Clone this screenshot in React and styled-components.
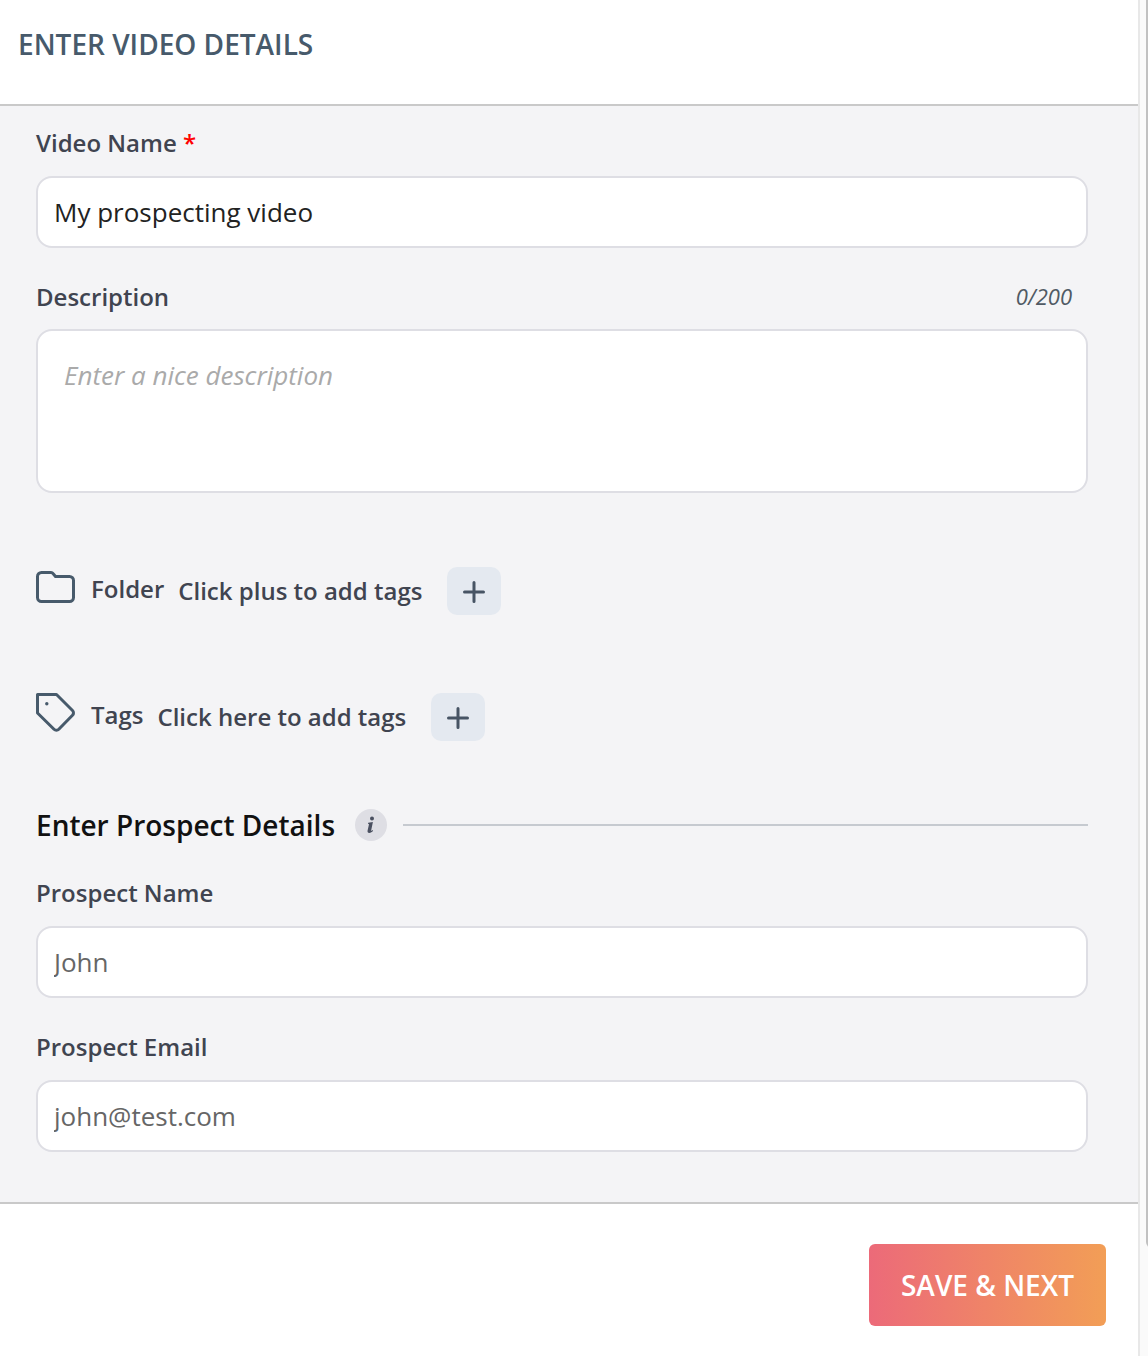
import React, { useState } from "react";
import styled, { createGlobalStyle } from "styled-components";

const GlobalStyle = createGlobalStyle`
  *, *::before, *::after { box-sizing: border-box; }
  body {
    margin: 0;
    background: #fafafa;
    font-family: "Open Sans", "Noto Sans", sans-serif;
  }
  button, input, textarea { font: inherit; }
`;

const Page = styled.div`
  display: flex;
  min-height: 100vh;
`;

const Panel = styled.form`
  flex: 1;
  min-width: 0;
  display: flex;
  flex-direction: column;
  background: #fff;
`;

const ScrollTrack = styled.div`
  width: 10px;
  overflow: hidden;
  background: #fafafa;
  border-left: 2px solid #e8e8e8;
`;

const ScrollThumb = styled.div`
  width: 12px;
  height: 92vh;
  margin-left: 6px;
  border-radius: 0 0 6px 6px;
  background: #c1c1c1;
`;

const Header = styled.header`
  padding: 24px 18px 40px;
  border-bottom: 2px solid #c9c9c9;
`;

const Title = styled.h1`
  margin: 0;
  font-size: 28px;
  line-height: 40px;
  font-weight: 600;
  color: #475a6b;
`;

const Body = styled.main`
  flex: 1;
  padding: 20px 50px 50px 36px;
  background: #f4f4f6;
`;

const Fields = styled.div`
  display: flex;
  flex-direction: column;
  gap: 32px;
`;

const Field = styled.div`
  display: flex;
  flex-direction: column;
  gap: 16px;
`;

const LabelRow = styled.div`
  display: flex;
  justify-content: space-between;
  height: 33px;
  padding-right: 16px;
`;

const Label = styled.label`
  font-size: 24px;
  line-height: 34px;
  font-weight: 600;
  color: #404450;
`;

const Required = styled.span`
  color: #f00;
`;

const Counter = styled.span`
  font-size: 22px;
  line-height: 32px;
  font-style: italic;
  color: #505a64;
`;

const TextInput = styled.input`
  width: 100%;
  height: 72px;
  padding: 0 16px;
  border: 2px solid #dedee4;
  border-radius: 16px;
  background: #fff;
  font-size: 26px;
  color: #222;
  &::placeholder { color: #666; opacity: 1; }
`;

const TextArea = styled.textarea`
  display: block;
  width: 100%;
  height: 164px;
  padding: 26px;
  border: 2px solid #dedee4;
  border-radius: 16px;
  background: #fff;
  font-size: 26px;
  line-height: 36px;
  color: #222;
  resize: none;
  &::placeholder { color: #aaa; font-style: italic; opacity: 1; }
`;

const Pickers = styled.div`
  display: flex;
  flex-direction: column;
  gap: 78px;
  padding: 74px 0 65px;
`;

const PickerRow = styled.div`
  display: flex;
  align-items: flex-start;
  font-size: 24px;
  font-weight: 600;
  color: #404450;
`;

const PickerIcon = styled.svg`
  width: 40px;
  height: 40px;
  margin-right: 15px;
  fill: none;
  stroke: #475a6b;
  stroke-width: 3;
  stroke-linejoin: round;
  stroke-linecap: round;
`;

const PickerName = styled.span`
  margin-right: 14px;
  line-height: 44px;
`;

const PickerHint = styled.span`
  margin-right: 25px;
  line-height: 48px;
`;

const AddButton = styled.button`
  display: grid;
  place-items: center;
  width: 54px;
  height: 48px;
  padding: 2px 0 0;
  border: 0;
  border-radius: 10px;
  background: #e4e9f0;
  cursor: pointer;
`;

const SectionHead = styled.div`
  display: flex;
  align-items: center;
  margin-bottom: 32px;
`;

const SectionTitle = styled.h2`
  margin: 0 20px 0 0;
  font-size: 28px;
  line-height: 38px;
  font-weight: 600;
  color: #111;
`;

const InfoButton = styled.button`
  display: grid;
  place-items: center;
  width: 32px;
  height: 32px;
  margin-right: 16px;
  padding: 0;
  border: 0;
  border-radius: 50%;
  background: #dedee4;
`;

const Rule = styled.div`
  flex: 1;
  height: 2px;
  background: #c6cad0;
`;

const Footer = styled.footer`
  display: flex;
  justify-content: flex-end;
  padding: 40px 32px 30px;
  border-top: 2px solid #c9c9c9;
`;

const SaveButton = styled.button`
  height: 82px;
  padding: 0 32px;
  border: 0;
  border-radius: 6px;
  background: linear-gradient(90deg, #ec6a79, #f29e56);
  font-size: 28px;
  font-weight: 600;
  color: #fff;
  cursor: pointer;
`;

const MAX_DESCRIPTION = 200;

function Plus() {
  return (
    <svg width="22" height="22" viewBox="0 0 22 22" fill="none" stroke="#475464" strokeWidth="3" strokeLinecap="round" aria-hidden="true">
      <path d="M11 1.5v19M1.5 11h19" />
    </svg>
  );
}

function Picker({ name, hint, children }) {
  return (
    <PickerRow>
      <PickerIcon viewBox="0 0 40 40" aria-hidden="true">{children}</PickerIcon>
      <PickerName>{name}</PickerName>
      <PickerHint>{hint}</PickerHint>
      <AddButton type="button" aria-label={`Add ${name}`}><Plus /></AddButton>
    </PickerRow>
  );
}

export default function App() {
  const [videoName, setVideoName] = useState("My prospecting video");
  const [description, setDescription] = useState("");

  return (
    <Page>
      <GlobalStyle />
      <Panel onSubmit={(e) => e.preventDefault()}>
        <Header>
          <Title>ENTER VIDEO DETAILS</Title>
        </Header>
        <Body>
          <Fields>
            <Field>
              <Label htmlFor="video-name">Video Name <Required>*</Required></Label>
              <TextInput id="video-name" value={videoName} onChange={(e) => setVideoName(e.target.value)} />
            </Field>
            <Field>
              <LabelRow>
                <Label htmlFor="description">Description</Label>
                <Counter>{description.length}/{MAX_DESCRIPTION}</Counter>
              </LabelRow>
              <TextArea
                id="description"
                placeholder="Enter a nice description"
                maxLength={MAX_DESCRIPTION}
                value={description}
                onChange={(e) => setDescription(e.target.value)}
              />
            </Field>
          </Fields>
          <Pickers>
            <Picker name="Folder" hint="Click plus to add tags">
              <path d="M5.5 5.5H15c1 0 1.600.4 2.200 1.200L19.500 9.500H33.500a4 4 0 0 1 4 4V30.500a4 4 0 0 1-4 4H5.500a4 4 0 0 1-4-4V9.500a4 4 0 0 1 4-4Z" />
            </Picker>
            <Picker name="Tags" hint="Click here to add tags">
              <path d="M1.500 1.500H20.500L36.500 17.500a3.400 3.400 0 0 1 0 4.800L22.800 36.200a3.400 3.400 0 0 1-4.800 0L1.500 20Z" />
              <circle cx="10.800" cy="10.800" r="1.700" fill="#475a6b" stroke="none" />
            </Picker>
          </Pickers>
          <SectionHead>
            <SectionTitle>Enter Prospect Details</SectionTitle>
            <InfoButton type="button" aria-label="About prospect details">
              <svg width="8" height="18" viewBox="0 0 8 18" fill="#4a5060" aria-hidden="true">
                <circle cx="5" cy="2.500" r="2" />
                <path d="M1.200 6.800 5.900 6 4.200 14.200c-.1.600.2.800.6.500l.9-.6.4.7C5 16.100 3.700 17 2.300 17 .8 17 .3 16 .6 14.600L2 8.200l-1-.4Z" />
              </svg>
            </InfoButton>
            <Rule />
          </SectionHead>
          <Fields>
            <Field>
              <Label htmlFor="prospect-name">Prospect Name</Label>
              <TextInput id="prospect-name" placeholder="John" />
            </Field>
            <Field>
              <Label htmlFor="prospect-email">Prospect Email</Label>
              <TextInput id="prospect-email" type="email" placeholder="john@test.com" />
            </Field>
          </Fields>
        </Body>
        <Footer>
          <SaveButton type="submit">SAVE &amp; NEXT</SaveButton>
        </Footer>
      </Panel>
      <ScrollTrack>
        <ScrollThumb />
      </ScrollTrack>
    </Page>
  );
}
